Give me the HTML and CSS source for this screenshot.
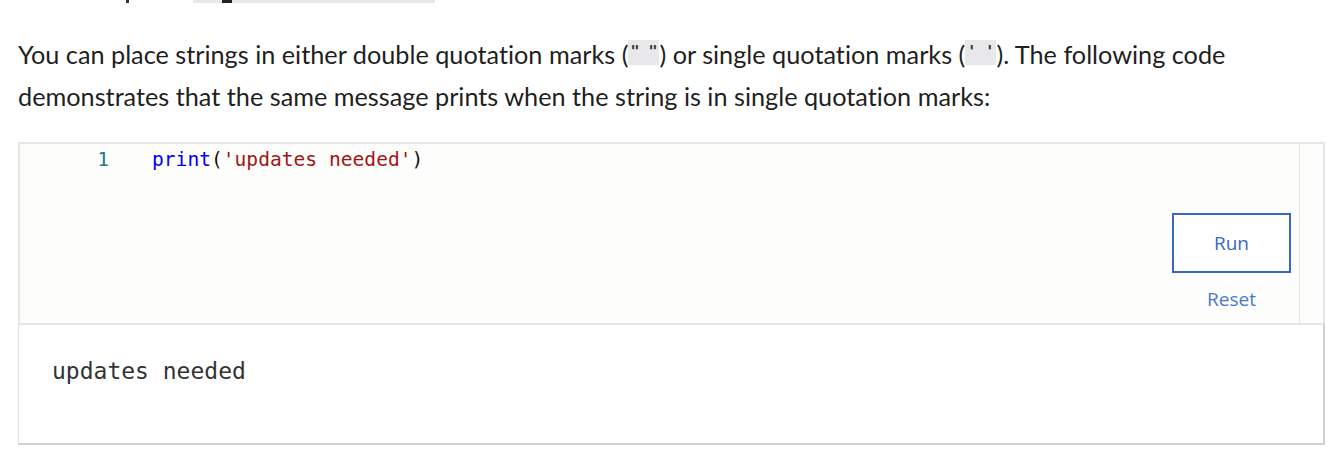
FILE: index.html
```html
<!DOCTYPE html>
<html>
<head>
<meta charset="utf-8">
<link rel="stylesheet" href="styles.css">
</head>
<body>
<div class="prev"><span class="prev-tick"></span><span class="prev-code"><span class="prev-mark"></span></span></div>
<p class="text">You can place strings in either double quotation marks (<code class="inline">" "</code>) or single quotation marks (<code class="inline">' '</code>). The following code demonstrates that the same message prints when the string is in single quotation marks:</p>
<div class="editor">
  <div class="gutter"><span class="ln">1</span></div>
  <div class="code"><span class="kw">print</span><span class="pn">(</span><span class="str">'updates needed'</span><span class="pn">)</span></div>
  <div class="controls">
    <button class="run">Run</button>
    <a class="reset">Reset</a>
  </div>
  <div class="strip"></div>
</div>
<div class="output">updates needed</div>
</body>
</html>
```
FILE: styles.css
```css
html, body { margin: 0; padding: 0; background: #ffffff; }
body { padding-left: 18px; width: 1307px; font-family: Lato, "Open Sans", sans-serif; color: #222; }

.prev { height: 3px; display: flex; }
.prev-tick { display: block; width: 3px; height: 3px; background: #333; margin-left: 108px; }
.prev-code { display: block; width: 242px; height: 3px; background: #e8e8ea; margin-left: 64px; }
.prev-mark { display: block; width: 10px; height: 3px; background: #222; margin-left: 29px; }

.text { margin: 30px 0 0 0; font-size: 25.25px; line-height: 42px; color: #1f1f1f; width: 1260px; font-variant-ligatures: none; }
.inline { display: inline-block; vertical-align: top; margin-top: 7px; height: 25px; line-height: 25px; font-family: "DejaVu Sans Mono", monospace; font-size: 15px; font-weight: bold; background: #e8e8ea; padding: 0 2px; color: #333; }

.editor { margin-top: 25px; height: 179px; display: flex; border-top: 2px solid #e6e6e6; border-left: 2px solid #e6e6e6; background: #fdfdfb; }
.gutter { width: 89px; text-align: right; padding-top: 4px; }
.ln { font-family: "DejaVu Sans Mono", monospace; font-size: 19.6px; line-height: 24px; color: #237893; }
.code { flex: 1; padding-left: 43px; padding-top: 4px; font-family: "DejaVu Sans Mono", monospace; font-size: 19.6px; line-height: 24px; white-space: pre; }
.kw { color: #0000ff; }
.pn { color: #111; }
.str { color: #a31515; }

.controls { width: 140px; display: flex; flex-direction: column; align-items: flex-end; padding-right: 8px; padding-top: 69px; }
.run { width: 119px; height: 60px; border: 2px solid #3a66c4; background: #fff; color: #3a66c4; font-family: "Open Sans", sans-serif; font-size: 19px; cursor: pointer; }
.reset { width: 119px; text-align: center; margin-top: 13px; font-family: "Open Sans", sans-serif; font-size: 19px; color: #4a78d0; }
.strip { width: 23px; border-left: 1px solid #e6e6e6; border-right: 2px solid #e6e6e6; background: #fdfdfb; }

.output { border: 1px solid #dedede; border-top: 2px solid #e6e6e6; border-right: 2px solid #cfcfcf; border-bottom: 2px solid #d2d2d2; box-sizing: border-box; height: 122px; padding: 30px 0 0 33px; font-family: "DejaVu Sans Mono", monospace; font-size: 23px; line-height: 32px; color: #333; }
```
